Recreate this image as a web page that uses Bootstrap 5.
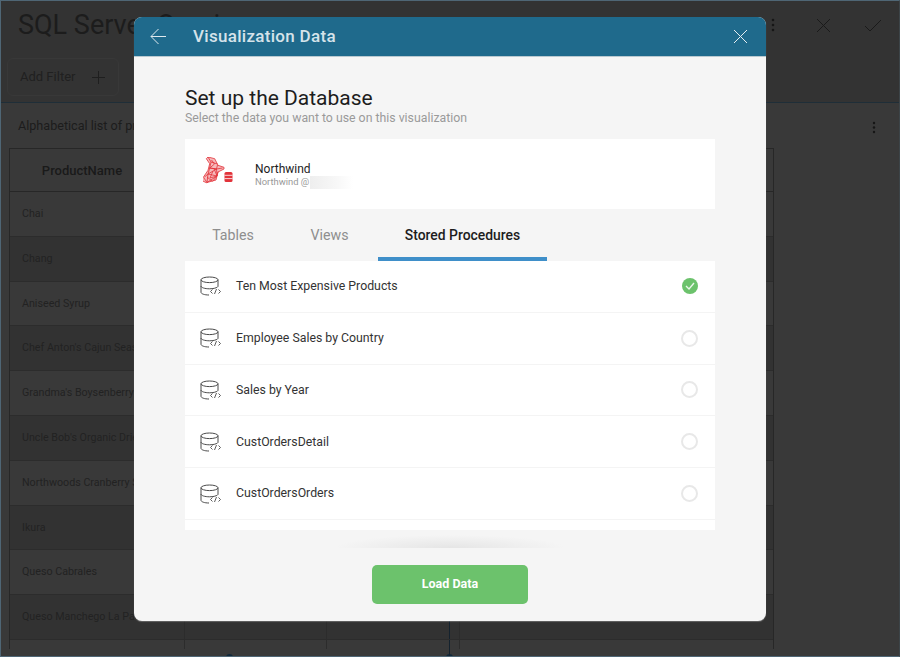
<!DOCTYPE html>
<html lang="en">
<head>
    <meta charset="UTF-8">
    <meta name="viewport" content="width=device-width, initial-scale=1.0">
    <title>Visualization Data</title>
    <link rel="stylesheet" href="https://cdn.jsdelivr.net/npm/bootstrap@5.3.0/dist/css/bootstrap.min.css">
    <script src="https://cdn.jsdelivr.net/npm/bootstrap@5.3.0/dist/js/bootstrap.bundle.min.js"></script>
    <style>
        html, body { height: 100%; }
        body {
            background: #393939;
            font-family: Roboto, "Liberation Sans", sans-serif;
            overflow: hidden;
        }
        .app-frame {
            position: relative;
            width: 900px;
            height: 657px;
            overflow: hidden;
            border: 1px solid #4f6675;
            border-right-color: #3c4448;
            background: #393939;
            color: #1c1c1c;
        }
        .app-head {
            height: 102px;
            background: #333;
            border-bottom: 1px solid #1f2e38;
        }
        .app-title {
            font-size: 27px;
            line-height: 32px;
            padding: 8px 0 0 17px;
            height: 57px;
            white-space: nowrap;
            margin: 0;
            font-weight: 400;
        }
        .head-actions { position: absolute; top: 10px; right: 0; height: 28px; }
        .filter-btn {
            margin-left: 6px;
            width: 112px;
            height: 38px;
            border: 1px solid #383838;
            border-radius: 6px;
            padding-left: 12px;
            font-size: 13px;
            color: #202020;
        }
        .sheet-title {
            height: 45px;
            padding: 14px 17px 0;
            font-size: 12.6px;
            white-space: nowrap;
        }
        .data-grid {
            margin-left: 8px;
            width: 765px;
            border-top: 1px solid #272727;
            border-left: 1px solid #272727;
            border-right: 1px solid #272727;
        }
        .grid-row { display: flex; height: 44.8px; border-bottom: 1px solid #2c2c2c; }
        .grid-row.is-head { height: 43px; border-bottom-color: #272727; }
        .grid-row.is-dark { background: #323232; }
        .grid-row.is-tail { height: 9px; border-bottom: 0; }
        .grid-cell { width: 175px; padding-left: 12px; font-size: 10.7px; line-height: 43px; white-space: nowrap; overflow: hidden; border-right: 1px solid #2c2c2c; color: #222; }
        .is-head .grid-cell { font-size: 13px; font-weight: 500; text-align: center; padding: 0 30px 0 0; color: #1a1a1a; }
        .grid-cell.w-b { width: 142px; }
        .grid-cell.w-c { width: 123px; border-right-color: #14222e; }
        .grid-cell.w-d { width: 10px; padding: 0; }
        .grid-cell.w-e { flex: 1; border-right: 0; }
        .timeline-dot { position: absolute; bottom: -5px; width: 7px; height: 7px; border-radius: 50%; background: #10283a; }
        .timeline-stem { position: absolute; left: 448px; bottom: 0; width: 1px; height: 9px; background: #14222e; }

        .data-modal {
            position: absolute;
            left: 133px;
            top: 16px;
            width: 632px;
            height: 604px;
            background: #f5f5f5;
            border-radius: 8px;
            overflow: hidden;
            box-shadow: 0 1px 1px rgba(255, 255, 255, .25);
        }
        .modal-bar {
            height: 40px;
            background: #1f6a8c;
            color: #d5e3ea;
            border-bottom: 1px solid #b9c9d0;
            padding: 0 18px 0 16px;
        }
        .modal-bar h2 { font-size: 17px; font-weight: 500; margin: 0 0 0 26px; letter-spacing: .3px; line-height: 39px; }
        .modal-main { padding: 28px 51px 0; }
        .setup-title { font-size: 21px; font-weight: 400; line-height: 26px; margin: 0; color: #1d1d1d; }
        .setup-sub { font-size: 12.3px; line-height: 14px; color: #9a9a9a; margin-bottom: 14px; }
        .conn-card { height: 70px; background: #fff; padding-left: 18px; }
        .conn-name { font-size: 12px; line-height: 14px; color: #1d1d1d; }
        .conn-sub { font-size: 9.4px; line-height: 12px; color: #999; display: flex; }
        .redacted { display: inline-block; width: 43px; height: 13px; margin-left: 1px; background: linear-gradient(90deg, #eee, #f7f7f7 60%, #fff); }
        .conn-text { margin-left: 22px; padding-top: 2px; }
        .tab-strip { height: 52px; }
        .tab-item { height: 52px; text-align: center; font-size: 14.2px; line-height: 53px; color: #8e8e8e; }
        .tab-item.t-a { width: 96px; }
        .tab-item.t-b { width: 97px; }
        .tab-item.t-c { width: 169px; font-size: 13.9px; color: #1d1d1d; font-weight: 500; border-bottom: 4px solid #3f8fc9; }
        .proc-list { height: 269px; overflow: hidden; background: #fff; }
        .proc-row { height: 51.8px; padding: 0 17px 0 15px; border-bottom: 1px solid #f4f4f4; font-size: 12.3px; color: #333; }
        .proc-row span { margin-left: 14px; flex: 1; }
        .radio-off { width: 17px; height: 17px; border: 2px solid #e8e8e8; border-radius: 50%; }
        .radio-on { width: 16px; height: 16px; margin: 0 .5px; border-radius: 50%; background: #6cc26c; }
        .fade-line {
            width: 230px;
            height: 13px;
            margin: 5px auto 0;
            background: radial-gradient(ellipse 50% 100% at 50% 100%, #e5e5e5, rgba(245, 245, 245, 0));
        }
        .load-btn {
            display: block;
            width: 156px;
            height: 39px;
            margin: 17px auto 0;
            background: #6cc26c;
            border: 0;
            border-radius: 5px;
            color: #fff;
            font-size: 12.5px;
            font-weight: 700;
        }
    </style>
</head>
<body>
    <div class="app-frame">
        <div class="app-head">
            <h1 class="app-title">SQL Server Queries</h1>
            <div class="filter-btn d-flex align-items-center">
                Add Filter
                <svg class="ms-3" width="15" height="15" viewBox="0 0 15 15" stroke="#1f1f1f" fill="none"><path d="M7.5 1v13M1 7.5h13"/></svg>
            </div>
            <div class="head-actions d-flex align-items-center">
                <svg width="4" height="14" viewBox="0 0 4 14" fill="#161616" style="margin-right:41px"><circle cx="2" cy="2" r="1.3"/><circle cx="2" cy="7" r="1.3"/><circle cx="2" cy="12" r="1.3"/></svg>
                <svg width="15" height="15" viewBox="0 0 15 15" stroke="#1a1a1a" fill="none" style="margin-right:33px"><path d="M1 1l13 13M14 1L1 14"/></svg>
                <svg width="18" height="13" viewBox="0 0 18 13" stroke="#1a1a1a" fill="none" style="margin-right:17px"><path d="M1 7l5 5L17 1"/></svg>
            </div>
        </div>
        <div class="sheet-title d-flex justify-content-between">
            Alphabetical list of products
            <svg class="mt-1" style="margin-right:6px" width="4" height="13" viewBox="0 0 4 13" fill="#161616"><circle cx="2" cy="2" r="1.2"/><circle cx="2" cy="6.5" r="1.2"/><circle cx="2" cy="11" r="1.2"/></svg>
        </div>
        <div class="data-grid" id="grid"></div>
        <i class="timeline-dot" style="left:225px"></i>
        <i class="timeline-dot" style="left:445px"></i>
        <i class="timeline-stem"></i>

        <div class="data-modal">
            <div class="modal-bar d-flex align-items-center">
                <svg width="17" height="17" viewBox="0 0 17 17" stroke="#dfe9ee" fill="none"><path d="M16 8.5H1M8.5 1L1 8.5 8.5 16"/></svg>
                <h2 class="flex-grow-1">Visualization Data</h2>
                <svg width="15" height="15" viewBox="0 0 15 15" stroke="#e6eef2" fill="none"><path d="M1 1l13 13M14 1L1 14"/></svg>
            </div>
            <div class="modal-main">
                <h3 class="setup-title">Set up the Database</h3>
                <div class="setup-sub">Select the data you want to use on this visualization</div>
                <div class="conn-card d-flex align-items-center">
                    <svg width="30" height="30" viewBox="0 0 30 30" fill="none" stroke="#e2333a" stroke-width=".8" style="margin-bottom:4px">
                        <path fill="#f6b9bb" d="M5 0l6.700 1.700 3.300 6.600 6 2 0 1.700-6 3-2 8-9.700 2.700-5-2.400 6.700-10 1.700-6.600-3.400-5z"/>
                        <path d="M5 0l3 5 6.500 2M8 5l-1.300 6 6.800 1 1-4M6.700 11l6.800 1 .5 7M6.700 11l-1.700 6 8.500-5 6-1M5 17l9 2 1-4.500M5 17l-1 8.500 10-6.500M1.500 20l3.500-3M4 25.500l-3-4.500M14 19l-4.500 5.500M8.500 3l3 4-4.800 4M11 11.500l3 7.500M10 14l-3 7 7-2M4 20l5 4"/>
                        <rect x="21.500" y="15" width="8" height="10" rx="1.500" fill="#e2333a" stroke="none"/>
                        <path d="M21.500 18.300h8M21.500 21.600h8" stroke="#fff"/>
                    </svg>
                    <div class="conn-text">
                        <div class="conn-name">Northwind</div>
                        <div class="conn-sub">Northwind @<i class="redacted"></i></div>
                    </div>
                </div>
                <div class="tab-strip d-flex">
                    <div class="tab-item t-a">Tables</div>
                    <div class="tab-item t-b">Views</div>
                    <div class="tab-item t-c">Stored Procedures</div>
                </div>
                <div class="proc-list" id="procs"></div>
                <div class="fade-line"></div>
                <button class="load-btn" type="button">Load Data</button>
            </div>
        </div>
    </div>

    <script>
        const products = ["Chai", "Chang", "Aniseed Syrup", "Chef Anton's Cajun Seasoning", "Grandma's Boysenberry Spread", "Uncle Bob's Organic Dried Pears", "Northwoods Cranberry Sauce", "Ikura", "Queso Cabrales", "Queso Manchego La Pastora"];
        const cells = name => `<div class="grid-cell">${name}</div><div class="grid-cell w-b"></div><div class="grid-cell w-c"></div><div class="grid-cell w-d"></div><div class="grid-cell w-e"></div>`;
        document.getElementById("grid").innerHTML =
            `<div class="grid-row is-head">${cells("ProductName")}</div>` +
            products.map((p, i) => `<div class="grid-row${i % 2 ? " is-dark" : ""}">${cells(p)}</div>`).join("") +
            `<div class="grid-row is-tail">${cells("")}</div>`;

        const dbIcon = `<svg width="22" height="20" viewBox="0 0 22 20" fill="none" stroke="#4a4a4a" stroke-width="1">
            <ellipse cx="9.500" cy="3.800" rx="8.500" ry="2.800"/>
            <path d="M1 3.800v12.400c0 1.600 3.400 2.800 8 2.800M18 3.800v7M1 10c0 1.600 3.800 2.800 8.500 2.800 3.500 0 6.500-.7 8-1.800"/>
            <path d="M12.500 13.500l-2 2 2 2M18.500 13.500l2 2-2 2M16.500 13l-2 5" stroke-width=".9"/>
        </svg>`;
        const check = `<div class="radio-on d-flex align-items-center justify-content-center"><svg width="10" height="8" viewBox="0 0 10 8" fill="none" stroke="#e9f6e9" stroke-width="1.400"><path d="M1 4l3 3 5-6"/></svg></div>`;
        const procs = ["Ten Most Expensive Products", "Employee Sales by Country", "Sales by Year", "CustOrdersDetail", "CustOrdersOrders", ""];
        document.getElementById("procs").innerHTML = procs.map((p, i) =>
            `<div class="proc-row d-flex align-items-center">${p ? dbIcon : ""}<span>${p}</span>${p ? (i === 0 ? check : '<div class="radio-off"></div>') : ""}</div>`
        ).join("");
    </script>
</body>
</html>
